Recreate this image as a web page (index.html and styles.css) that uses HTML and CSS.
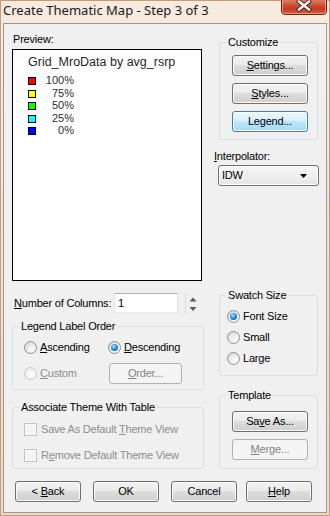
FILE: index.html
```html
<!DOCTYPE html>
<html>
<head>
<meta charset="utf-8">
<link rel="stylesheet" href="styles.css">
</head>
<body>
<div class="window">
  <div class="titlebar">
    <span class="title">Create Thematic Map - Step 3 of 3</span>
    <div class="close">
      <svg width="46" height="15" viewBox="0 0 46 15">
        <defs>
          <linearGradient id="cg" x1="0" y1="0" x2="0" y2="1">
            <stop offset="0" stop-color="#e9a48c"/>
            <stop offset="0.45" stop-color="#d0573c"/>
            <stop offset="0.7" stop-color="#c2391f"/>
            <stop offset="1" stop-color="#d96a48"/>
          </linearGradient>
        </defs>
        <rect x="0.5" y="-4" width="45" height="18.5" rx="3.5" fill="url(#cg)" stroke="#6a2a1c"/>
        <rect x="1.5" y="-3" width="43" height="16.5" rx="2.5" fill="none" stroke="#f0b8a4" stroke-opacity="0.6"/>
        <path d="M18 1.5 L28 9.5 M28 1.5 L18 9.5" stroke="#4a1e14" stroke-width="4.2" stroke-linecap="square"/>
        <path d="M18 1.5 L28 9.5 M28 1.5 L18 9.5" stroke="#ffffff" stroke-width="2.4" stroke-linecap="square"/>
      </svg>
    </div>
  </div>
  <div class="client">
    <div class="main">
      <div class="col-left">
        <div class="preview-label">Preview:</div>
        <div class="preview">
          <div class="pv-title">Grid_MroData by avg_rsrp</div>
          <div class="pv-list">
            <div class="pv-row"><span class="sw sw-red"></span><span class="pv-val">100%</span></div>
            <div class="pv-row"><span class="sw sw-yellow"></span><span class="pv-val">75%</span></div>
            <div class="pv-row"><span class="sw sw-green"></span><span class="pv-val">50%</span></div>
            <div class="pv-row"><span class="sw sw-cyan"></span><span class="pv-val">25%</span></div>
            <div class="pv-row"><span class="sw sw-blue"></span><span class="pv-val">0%</span></div>
          </div>
        </div>
        <div class="num-row">
          <span class="num-label"><u>N</u>umber of Columns:</span>
          <div class="textbox">1</div>
          <div class="spin">
            <svg width="16" height="20" viewBox="0 0 16 20">
              <line x1="0.5" y1="0" x2="0.5" y2="20" stroke="#dadada"/>
              <path d="M4.5 8.5 L8 4.5 L11.5 8.5 Z" fill="#5a5a5a"/>
              <path d="M4.5 14 L8 18 L11.5 14 Z" fill="#5a5a5a"/>
            </svg>
          </div>
        </div>
        <fieldset class="group g-order">
          <legend>Legend Label Order</legend>
          <div class="gin gin-order">
            <div class="grow">
              <div class="opt w84"><span class="radio"></span><span><u>A</u>scending</span></div>
              <div class="opt"><span class="radio on"></span><span><u>D</u>escending</span></div>
            </div>
            <div class="grow">
              <div class="opt w85 dis"><span class="radio"></span><span><u>C</u>ustom</span></div>
              <div class="btn dis order-btn"><span><u>O</u>rder...</span></div>
            </div>
          </div>
        </fieldset>
        <fieldset class="group g-assoc">
          <legend>Associate Theme With Table</legend>
          <div class="gin gin-assoc">
            <div class="crow dis"><span class="check"></span><span>Save As Default <u>T</u>heme View</span></div>
            <div class="crow dis"><span class="check"></span><span>R<u>e</u>move Default Theme View</span></div>
          </div>
        </fieldset>
      </div>
      <div class="col-right">
        <fieldset class="group g-custom">
          <legend>Customize</legend>
          <div class="gin gin-custom">
            <div class="btn"><span><u>S</u>ettings...</span></div>
            <div class="btn"><span><u>S</u>tyles...</span></div>
            <div class="btn focus"><span>Legend...</span></div>
          </div>
        </fieldset>
        <div class="interp-label"><u>I</u>nterpolator:</div>
        <div class="combo">
          <span>IDW</span>
          <svg width="7" height="4" viewBox="0 0 7 4"><path d="M0 0 H7 L3.5 4 Z" fill="#000"/></svg>
        </div>
        <fieldset class="group g-swatch">
          <legend>Swatch Size</legend>
          <div class="gin gin-swatch">
            <div class="srow"><span class="radio on"></span><span>Font Size</span></div>
            <div class="srow"><span class="radio"></span><span>Small</span></div>
            <div class="srow"><span class="radio"></span><span>Large</span></div>
          </div>
        </fieldset>
        <fieldset class="group g-template">
          <legend>Template</legend>
          <div class="gin gin-template">
            <div class="btn"><span>Sa<u>v</u>e As...</span></div>
            <div class="btn dis"><span><u>M</u>erge...</span></div>
          </div>
        </fieldset>
      </div>
    </div>
    <div class="buttons">
      <div class="btn b-back"><span>&lt; <u>B</u>ack</span></div>
      <div class="btn b-ok"><span>OK</span></div>
      <div class="btn b-cancel"><span>Cancel</span></div>
      <div class="btn b-help"><span><u>H</u>elp</span></div>
    </div>
  </div>
</div>
</body>
</html>
```

FILE: styles.css
```css
* { box-sizing: border-box; }
html, body { margin: 0; padding: 0; }
body {
  width: 330px;
  height: 516px;
  overflow: hidden;
  font-family: "Liberation Sans", Arial, sans-serif;
  font-size: 11px;
  line-height: 13px;
  letter-spacing: -0.2px;
  color: #000;
}
u { text-decoration: underline; text-underline-offset: 1px; }

.window {
  width: 330px;
  height: 516px;
  padding: 0 3px 3px 3px;
  background: linear-gradient(#f7eadf, #eed9c7);
  box-shadow: inset 0 0 0 1px #c49b7e;
  display: flex;
  flex-direction: column;
}
.titlebar {
  height: 23px;
  flex: none;
  display: flex;
  align-items: flex-start;
}
.title {
  font-family: "Noto Sans", "Open Sans", sans-serif;
  font-size: 13px;
  line-height: 16px;
  letter-spacing: 0;
  margin-top: 2px;
  color: #1b1b1b;
  white-space: nowrap;
}
.close {
  margin-left: auto;
  width: 46px;
  height: 15px;
}
.close svg { display: block; }

.client {
  flex: 1;
  background: #f0f0f0;
  border: 1px solid #9a9a9a;
  padding: 0 0 0 8px;
  display: flex;
  flex-direction: column;
}
.main {
  display: flex;
  align-items: flex-start;
  gap: 14px;
  height: 445px;
}
.col-left { width: 192px; display: flex; flex-direction: column; }
.col-right { width: 101px; display: flex; flex-direction: column; }

.preview-label { margin-top: 9px; margin-left: 1px; height: 13px; }
.preview {
  margin-top: 3px;
  width: 190px;
  height: 232px;
  border: 1px solid #000;
  background: #fff;
  padding: 5px 0 0 15px;
}
.pv-title {
  font-size: 12.5px;
  line-height: 15px;
  letter-spacing: 0;
  color: #1f1f1f;
  white-space: nowrap;
}
.pv-list { margin-top: 4px; }
.pv-row {
  display: flex;
  align-items: flex-start;
  height: 12.5px;
  line-height: 12.5px;
}
.sw {
  flex: none;
  width: 8px;
  height: 8px;
  border: 1px solid #000;
  margin-top: 3px;
}
.sw-red { background: #ff0000; }
.sw-yellow { background: #ffff00; }
.sw-green { background: #00ff00; }
.sw-cyan { background: #00ffff; }
.sw-blue { background: #0000ff; }
.pv-val { width: 38px; text-align: right; color: #2c2c2c; letter-spacing: 0; }

.num-row {
  margin-top: 12px;
  height: 20px;
  display: flex;
  align-items: center;
}
.num-label { margin-left: 2px; width: 100px; white-space: nowrap; }
.textbox {
  width: 64px;
  height: 20px;
  border: 1px solid;
  border-color: #abadb3 #dbdfe6 #e3e9ef #e2e3ea;
  background: #fff;
  padding-left: 3px;
  line-height: 18px;
}
.spin { margin-left: 7px; width: 16px; height: 20px; }
.spin svg { display: block; }

.group {
  margin: 0;
  padding: 0;
  border: 1px solid #d5dfe5;
  border-radius: 3px;
  min-width: 0;
}
.group legend {
  padding: 0 2px;
  margin-left: 6px;
  line-height: 13px;
}

.g-order { margin-top: 7px; }
.gin-order { padding: 4px 0 6px 11px; }
.grow { display: flex; align-items: center; height: 20px; }
.grow + .grow { margin-top: 6px; }
.opt { display: flex; align-items: center; gap: 3px; white-space: nowrap; }
.w84 { width: 84px; }
.w85 { width: 85px; }
.order-btn { width: 73px; }

.g-assoc { margin-top: 11px; }
.gin-assoc { padding: 6px 0 4px 11px; }
.crow { display: flex; align-items: center; gap: 4px; height: 18px; white-space: nowrap; }
.crow + .crow { margin-top: 8px; }
.check {
  flex: none;
  width: 13px;
  height: 13px;
  border: 1px solid #c3c3c3;
  background: #f4f4f4;
  box-shadow: inset 0 0 0 1px #fafafa;
}

.radio {
  flex: none;
  width: 13px;
  height: 13px;
  border-radius: 50%;
  border: 1px solid #8f9090;
  background: radial-gradient(circle at 65% 70%, #ffffff 0%, #eeeeee 40%, #cfcfcf 100%);
  display: flex;
  align-items: center;
  justify-content: center;
}
.radio.on::after {
  content: "";
  width: 7px;
  height: 7px;
  border-radius: 50%;
  background: radial-gradient(circle at 40% 35%, #a8e4ff 0%, #3a9ae0 40%, #135a9e 80%, #0c3f75 100%);
}
.dis { color: #8d8d8d; }
.dis .radio {
  border-color: #c8c8c8;
  background: radial-gradient(circle at 65% 70%, #ffffff 0%, #f4f4f4 45%, #e2e2e2 100%);
}

.btn {
  flex: none;
  height: 21px;
  border: 1px solid #707070;
  border-radius: 3px;
  background: linear-gradient(#f2f2f2 0%, #ebebeb 50%, #dddddd 50%, #cfcfcf 100%);
  box-shadow: inset 0 0 0 1px #fbfbfb;
  display: flex;
  align-items: center;
  justify-content: center;
  white-space: nowrap;
}
.btn.focus {
  border-color: #3c7fb1;
  background: linear-gradient(#eaf6fd 0%, #d9f0fc 50%, #bee6fd 50%, #a7d9f5 100%);
  box-shadow: inset 0 0 0 1px #fdfeff;
}
.btn.dis {
  border-color: #adb2b5;
  background: #f4f4f4;
  box-shadow: none;
  color: #838383;
}

.g-custom { margin-top: 12px; margin-left: 1px; width: 99px; }
.gin-custom { padding: 6px 0 7px 12px; display: flex; flex-direction: column; gap: 7px; }
.gin-custom .btn, .gin-template .btn { width: 76px; }

.interp-label { margin-top: 10px; margin-left: -4px; height: 13px; }
.combo {
  margin-top: 2px;
  width: 101px;
  height: 21px;
  border: 1px solid #707070;
  border-radius: 3px;
  background: linear-gradient(#f7f7f7, #e6e6e6);
  box-shadow: inset 0 0 0 1px #fcfcfc;
  display: flex;
  align-items: center;
  justify-content: space-between;
  padding: 0 11px 0 3px;
}
.combo svg { display: block; }

.g-swatch { margin-top: 103px; margin-left: 1px; width: 99px; }
.gin-swatch { padding: 6px 0 9px 7px; }
.srow { display: flex; align-items: center; gap: 3px; height: 16px; white-space: nowrap; }
.srow + .srow { margin-top: 5px; }

.g-template { margin-top: 13px; margin-left: 1px; width: 99px; }
.gin-template { padding: 9px 0 8px 12px; display: flex; flex-direction: column; gap: 7px; }

.buttons {
  display: flex;
  margin-top: 12px;
  padding-left: 3px;
}
.buttons .btn { width: 66px; }
.b-ok, .b-cancel { margin-left: 12px; }
.b-help { margin-left: 9px; }
```
